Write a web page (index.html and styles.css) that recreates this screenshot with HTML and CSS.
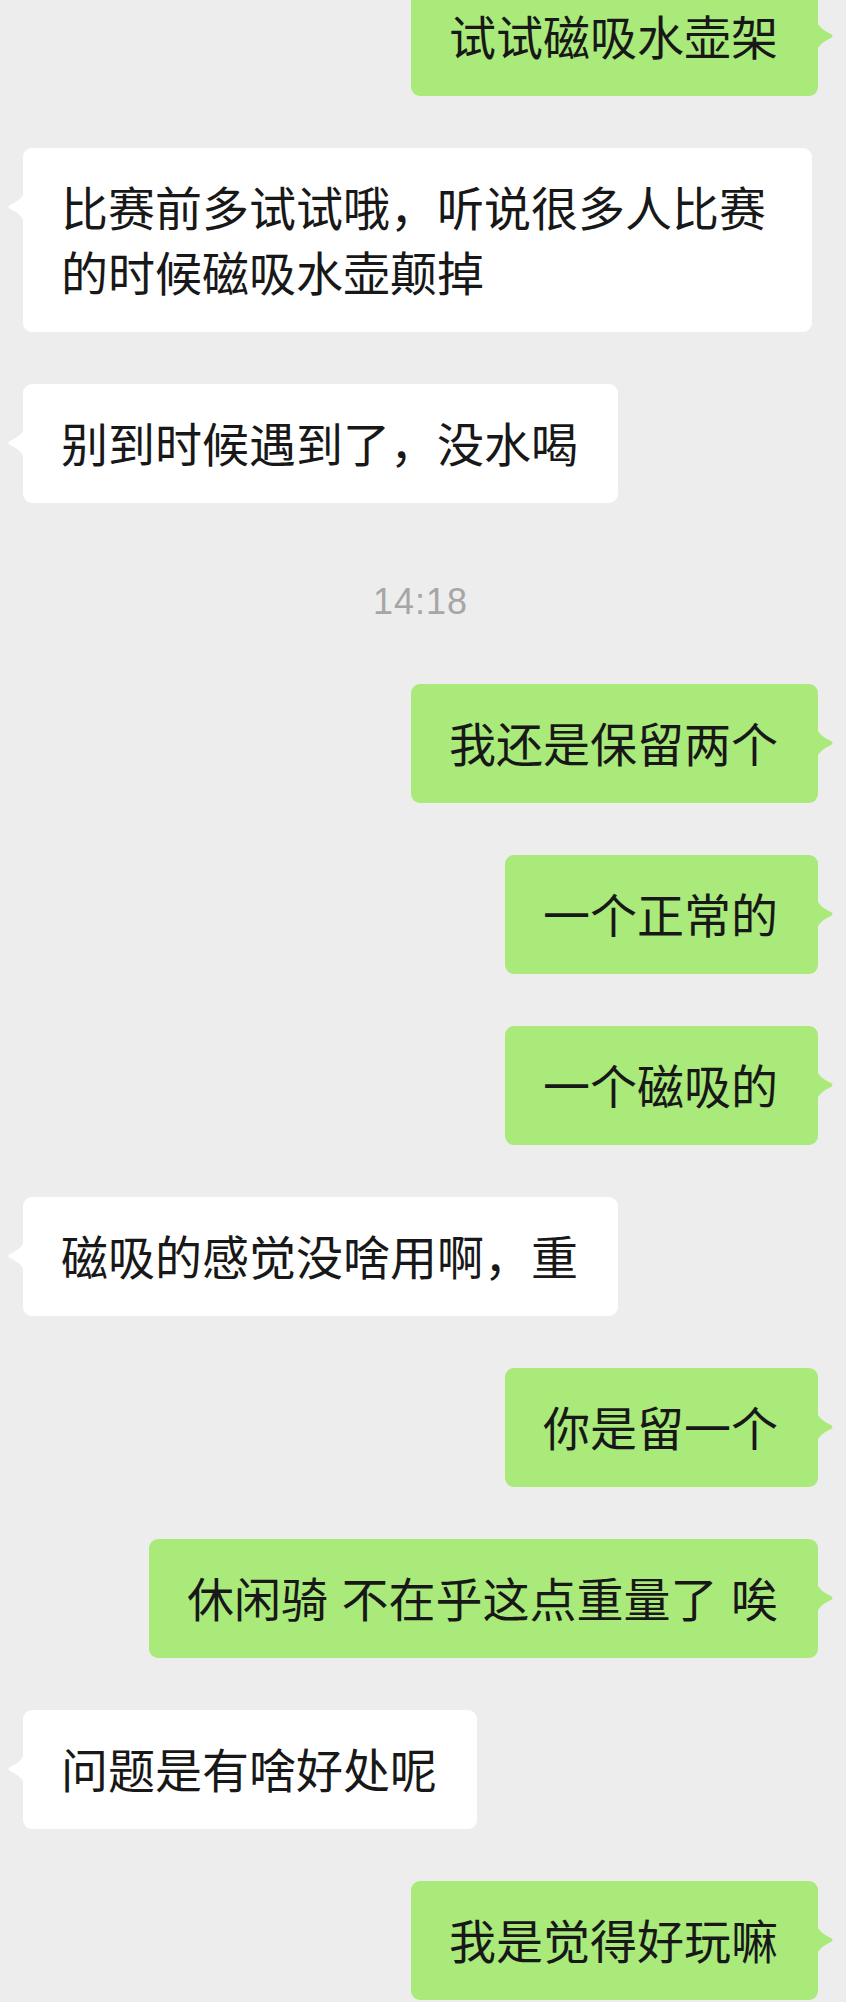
FILE: index.html
```html
<!DOCTYPE html>
<html lang="zh-CN">
<head>
  <meta charset="UTF-8" />
  <meta name="viewport" content="width=device-width, initial-scale=1" />
  <title>聊天记录</title>
  <link rel="stylesheet" href="styles.css">
</head>
<body>
  <div class="chat">
    <div class="msg mine">
      <div class="bubble">试试磁吸水壶架<svg class="tail" viewBox="0 0 17 34"><path d="M17 0 C17 6 13 10 3 15 Q0 17 3 19 C13 24 17 28 17 34 Z"/></svg></div>
    </div>
    <div class="msg">
      <div class="bubble">比赛前多试试哦，听说很多人比赛的时候磁吸水壶颠掉<svg class="tail" viewBox="0 0 17 34"><path d="M17 0 C17 6 13 10 3 15 Q0 17 3 19 C13 24 17 28 17 34 Z"/></svg></div>
    </div>
    <div class="msg">
      <div class="bubble">别到时候遇到了，没水喝<svg class="tail" viewBox="0 0 17 34"><path d="M17 0 C17 6 13 10 3 15 Q0 17 3 19 C13 24 17 28 17 34 Z"/></svg></div>
    </div>
    <div class="time">14:18</div>
    <div class="msg mine">
      <div class="bubble">我还是保留两个<svg class="tail" viewBox="0 0 17 34"><path d="M17 0 C17 6 13 10 3 15 Q0 17 3 19 C13 24 17 28 17 34 Z"/></svg></div>
    </div>
    <div class="msg mine">
      <div class="bubble">一个正常的<svg class="tail" viewBox="0 0 17 34"><path d="M17 0 C17 6 13 10 3 15 Q0 17 3 19 C13 24 17 28 17 34 Z"/></svg></div>
    </div>
    <div class="msg mine">
      <div class="bubble">一个磁吸的<svg class="tail" viewBox="0 0 17 34"><path d="M17 0 C17 6 13 10 3 15 Q0 17 3 19 C13 24 17 28 17 34 Z"/></svg></div>
    </div>
    <div class="msg">
      <div class="bubble">磁吸的感觉没啥用啊，重<svg class="tail" viewBox="0 0 17 34"><path d="M17 0 C17 6 13 10 3 15 Q0 17 3 19 C13 24 17 28 17 34 Z"/></svg></div>
    </div>
    <div class="msg mine">
      <div class="bubble">你是留一个<svg class="tail" viewBox="0 0 17 34"><path d="M17 0 C17 6 13 10 3 15 Q0 17 3 19 C13 24 17 28 17 34 Z"/></svg></div>
    </div>
    <div class="msg mine">
      <div class="bubble">休闲骑 不在乎这点重量了 唉<svg class="tail" viewBox="0 0 17 34"><path d="M17 0 C17 6 13 10 3 15 Q0 17 3 19 C13 24 17 28 17 34 Z"/></svg></div>
    </div>
    <div class="msg">
      <div class="bubble">问题是有啥好处呢<svg class="tail" viewBox="0 0 17 34"><path d="M17 0 C17 6 13 10 3 15 Q0 17 3 19 C13 24 17 28 17 34 Z"/></svg></div>
    </div>
    <div class="msg mine">
      <div class="bubble">我是觉得好玩嘛<svg class="tail" viewBox="0 0 17 34"><path d="M17 0 C17 6 13 10 3 15 Q0 17 3 19 C13 24 17 28 17 34 Z"/></svg></div>
    </div>
  </div>
</body>
</html>
```

FILE: styles.css
```css
body {
  margin: 0;
  padding: 0;
  background: #ededed;
  font-family: "Noto Sans CJK SC", "Noto Sans", sans-serif;
  color: #181818;
  overflow: hidden;
}
.chat {
  display: flex;
  flex-direction: column;
  gap: 52px;
  margin-top: -23px;
  padding: 0 28px 0 23px;
}
.msg {
  display: flex;
  justify-content: flex-start;
}
.msg.mine {
  justify-content: flex-end;
}
.bubble {
  position: relative;
  box-sizing: border-box;
  max-width: 789px;
  padding: 25px 40px 29px 38px;
  font-size: 47px;
  line-height: 65px;
  word-spacing: 3px;
  background: #ffffff;
  border-radius: 9px;
}
.mine .bubble {
  background: #a9ea7a;
}
.tail {
  position: absolute;
  top: 42px;
  left: -16px;
  width: 17px;
  height: 34px;
  fill: #ffffff;
}
.mine .tail {
  left: auto;
  right: -16px;
  transform: scaleX(-1);
  fill: #a9ea7a;
}
.time {
  padding-top: 17px;
  line-height: 60px;
  text-align: center;
  font-family: "Liberation Sans", Arial, sans-serif;
  font-size: 36px;
  letter-spacing: 1px;
  color: #a6a6a6;
}
```
